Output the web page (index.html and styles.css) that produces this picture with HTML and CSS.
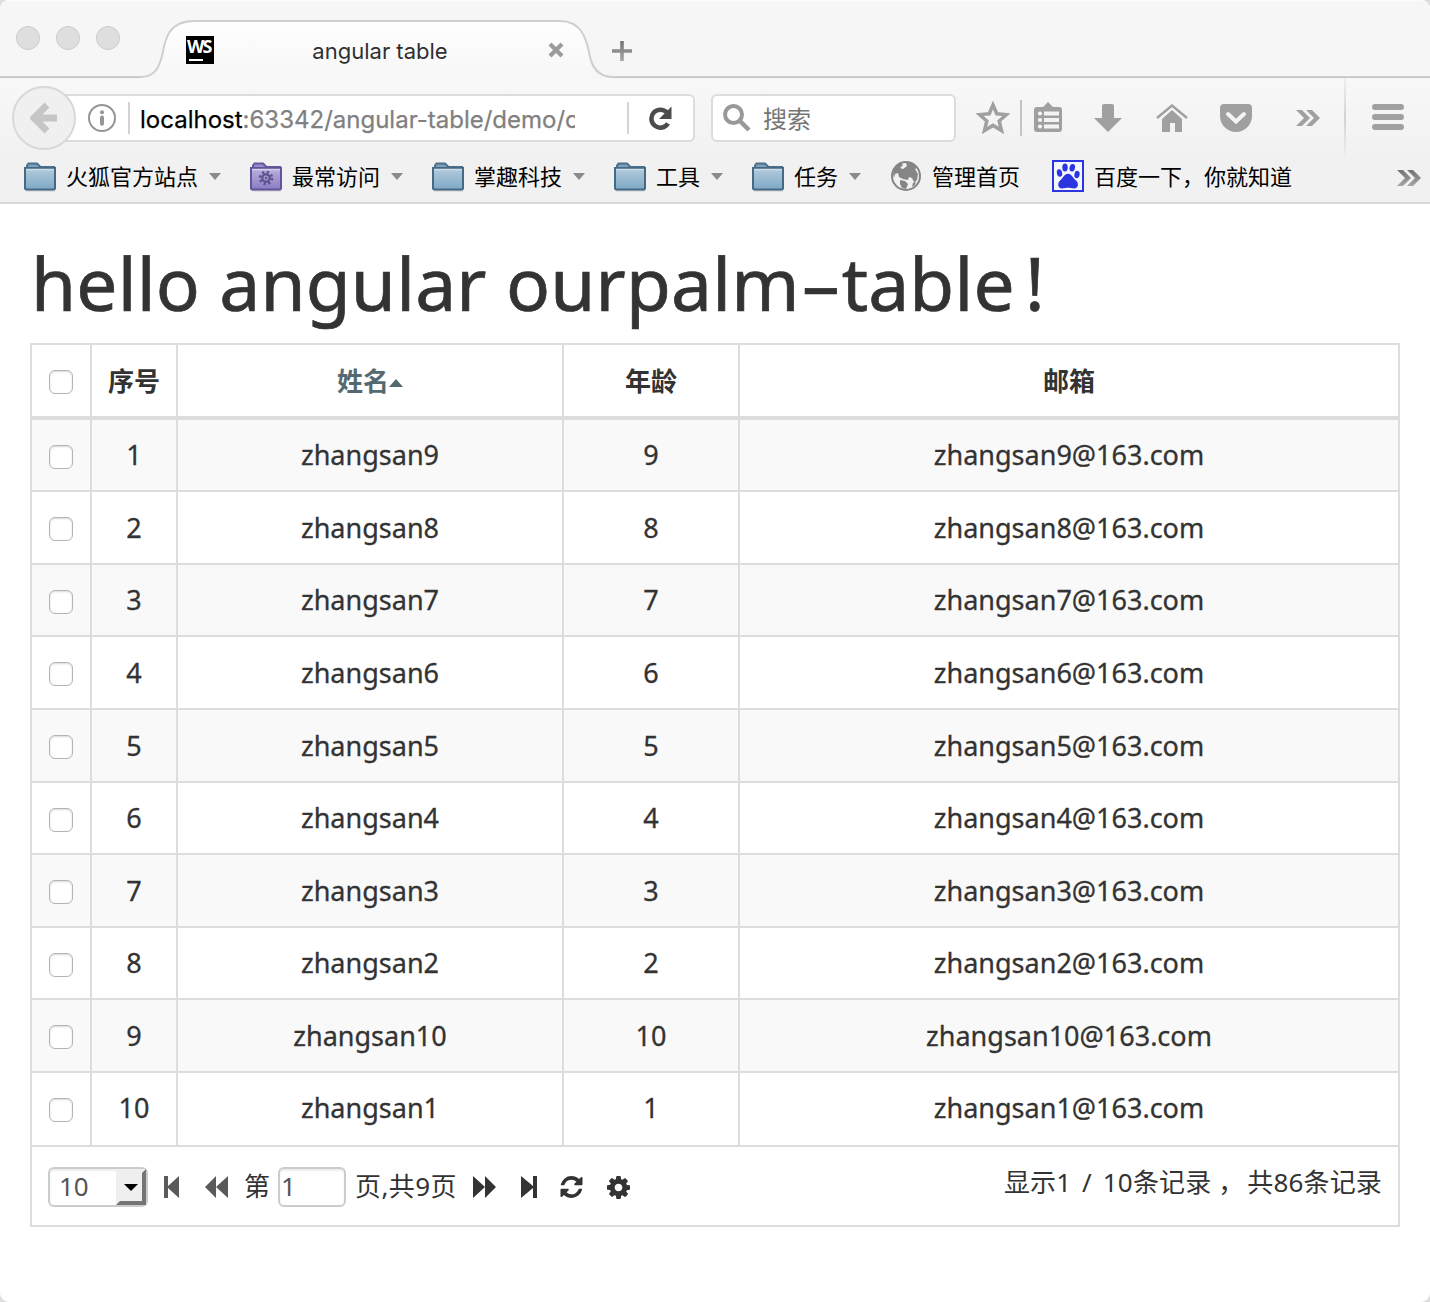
FILE: index.html
```html
<!DOCTYPE html>
<html lang="zh-CN">
<head>
<meta charset="utf-8">
<title>angular table</title>
<link rel="stylesheet" href="styles.css">
</head>
<body>
<svg class="defs" width="0" height="0" aria-hidden="true">
  <defs>
    <linearGradient id="blueFill" x1="0" y1="0" x2="0" y2="1"><stop offset="0" stop-color="#b4cbdb"/><stop offset="1" stop-color="#7ea9c7"/></linearGradient>
    <linearGradient id="purpleFill" x1="0" y1="0" x2="0" y2="1"><stop offset="0" stop-color="#bcb2dc"/><stop offset="1" stop-color="#8b7cc3"/></linearGradient>
    <linearGradient id="tabFill" x1="0" y1="0" x2="0" y2="1"><stop offset="0" stop-color="#fefefe"/><stop offset="1" stop-color="#f7f7f7"/></linearGradient>
    <linearGradient id="greyFill" x1="0" y1="0" x2="0" y2="1"><stop offset="0" stop-color="#737373"/><stop offset="1" stop-color="#a6a6a6"/></linearGradient>
    <symbol id="folder" viewBox="0 0 32 30">
      <path d="M2 28.500H31" stroke="#cfcfcf" stroke-width="2"/>
      <path d="M3 7V3.500L4.500 1.500H13L16.500 5H30V12H3Z" fill="#7ba0bd" stroke="#4d6f8a" stroke-width="2"/>
      <path d="M1 6H31V26.500L30 27.500H2L1 26.500Z" fill="url(#blueFill)" stroke="#466a84" stroke-width="2"/>
      <path d="M2 7.500H30" stroke="#cfdfe9" stroke-width="1.500"/>
    </symbol>
    <symbol id="smart-folder" viewBox="0 0 32 30">
      <path d="M2 28.500H31" stroke="#cfcfcf" stroke-width="2"/>
      <path d="M3 7V3.500L4.500 1.500H13L16.500 5H30V12H3Z" fill="#9a8cca" stroke="#66569c" stroke-width="2"/>
      <path d="M1 6H31V26.500L30 27.500H2L1 26.500Z" fill="url(#purpleFill)" stroke="#62549b" stroke-width="2"/>
      <path d="M2 7.500H30" stroke="#d6cfea" stroke-width="1.500"/>
      <circle cx="16" cy="16" r="5.800" fill="none" stroke="#5e548f" stroke-width="3" stroke-dasharray="2.200 2.355"/>
      <circle cx="16" cy="16" r="3.700" fill="none" stroke="#5e548f" stroke-width="2.200"/>
      <circle cx="16" cy="16" r="1.200" fill="#5e548f"/>
    </symbol>
    <symbol id="more" viewBox="0 0 24 18"><path d="M0 1H6L14 9L6 17H0L8 9ZM10 1H16L24 9L16 17H10L18 9Z"/></symbol>
  </defs>
</svg>
<div class="window">
  <header class="chrome">
    <div class="tabbar">
      <div class="lights"><i></i><i></i><i></i></div>
      <div class="tab">
        <svg class="tab-shape" width="474" height="78" viewBox="0 0 474 78">
          <path d="M0 78V77C14 77 19 69 22.500 54C25 40 28 21 54 21H420C441 21 446 38 449 52C451 66 457 77 473 77V78Z" fill="url(#tabFill)"/>
          <path d="M0 77C14 77 19 69 22.500 54C25 40 28 21 54 21H420C441 21 446 38 449 52C451 66 457 77 473 77" fill="none" stroke="#cfcfcf" stroke-width="2"/>
        </svg>
        <span class="favicon">WS</span>
        <span class="tab-title">angular table</span>
        <svg class="tab-close" width="16" height="16" viewBox="0 0 16 16"><path d="M2 2L14 14M14 2L2 14" stroke="#9b9b9b" stroke-width="4.200"/></svg>
      </div>
      <svg class="new-tab" width="20" height="20" viewBox="0 0 20 20"><path d="M8.200 0H11.800V8.200H20V11.800H11.800V20H8.200V11.800H0V8.200H8.200Z" fill="url(#greyFill)"/></svg>
    </div>
    <div class="navbar">
      <span class="back"><svg width="28" height="32" viewBox="0 0 28 32"><path d="M17 3L4 16L17 29M4 16H27" fill="none" stroke="#c6c6c6" stroke-width="7"/></svg></span>
      <div class="urlbar">
        <svg class="info" width="28" height="28" viewBox="0 0 28 28"><circle cx="14" cy="14" r="13" fill="none" stroke="#959595" stroke-width="2"/><circle cx="14" cy="8.300" r="2" fill="#959595"/><path d="M14 13.500V19.800" stroke="#959595" stroke-width="4" stroke-linecap="round"/></svg>
        <i class="line"></i>
        <span class="url"><b>localhost</b>:63342/angular-table/demo/c</span>
        <i class="line"></i>
        <svg class="reload" width="24" height="25" viewBox="0 0 24 25"><path d="M19 17.500A9 9 0 1 1 18 6.500" fill="none" stroke="#4c4c4c" stroke-width="4.500"/><path d="M22.500 .5V13H10Z" fill="#4c4c4c"/></svg>
      </div>
      <div class="search">
        <svg width="28" height="28" viewBox="0 0 28 28"><circle cx="10.500" cy="10.500" r="8.500" fill="none" stroke="#999" stroke-width="4"/><path d="M16.500 16.500L26 26" stroke="#999" stroke-width="4.500"/></svg>
        <span>搜索</span>
      </div>
      <svg class="tool star" width="34" height="34" viewBox="0 0 34 34"><path d="M17 4L20.800 12.800L30.500 13.600L23.200 20L25.500 29.500L17 24.400L8.500 29.500L10.800 20L3.500 13.600L13.200 12.800Z" fill="none" stroke="#a0a0a0" stroke-width="3.500"/></svg>
      <i class="tool-line"></i>
      <svg class="tool list" width="28" height="30" viewBox="0 0 28 30"><path fill="#a0a0a0" d="M9 5L14 0L19 5H25Q28 5 28 8V27Q28 30 25 30H3Q0 30 0 27V8Q0 5 3 5Z"/><path stroke="#f4f4f4" stroke-width="4" d="M10 11.500H25M10 18H25M10 24.500H25"/><g fill="#f4f4f4"><circle cx="6" cy="11.500" r="2.100"/><circle cx="6" cy="18" r="2.100"/><circle cx="6" cy="24.500" r="2.100"/></g></svg>
      <svg class="tool down" width="28" height="28" viewBox="0 0 28 28"><path fill="#a0a0a0" d="M10 0H18Q20 0 20 2V14H28L14 28L0 14H8V2Q8 0 10 0Z"/></svg>
      <svg class="tool home" width="32" height="28" viewBox="0 0 32 28"><path d="M1 14L16 1.500L31 14" fill="none" stroke="#a0a0a0" stroke-width="2.400"/><path fill="#a0a0a0" d="M16 6L26 15V28H19V19H14V28H6V15Z"/></svg>
      <svg class="tool pocket" width="32" height="28" viewBox="0 0 32 28"><path fill="#a0a0a0" d="M4 0H28Q32 0 32 4V12A16 16 0 0 1 0 12V4Q0 0 4 0Z"/><path d="M8 10L16 17.500L24 10" fill="none" stroke="#f4f4f4" stroke-width="4" stroke-linecap="round"/></svg>
      <svg class="tool over" width="24" height="18" fill="#a0a0a0"><use href="#more"/></svg>
      <i class="menu-line"></i>
      <span class="menu"><i></i><i></i><i></i></span>
    </div>
    <nav class="bookmarks">
      <span class="mark"><svg width="32" height="30"><use href="#folder"/></svg><em>火狐官方站点</em><i class="drop"></i></span>
      <span class="mark"><svg width="32" height="30"><use href="#smart-folder"/></svg><em>最常访问</em><i class="drop"></i></span>
      <span class="mark"><svg width="32" height="30"><use href="#folder"/></svg><em>掌趣科技</em><i class="drop"></i></span>
      <span class="mark"><svg width="32" height="30"><use href="#folder"/></svg><em>工具</em><i class="drop"></i></span>
      <span class="mark"><svg width="32" height="30"><use href="#folder"/></svg><em>任务</em><i class="drop"></i></span>
      <span class="mark"><svg width="32" height="32" viewBox="0 0 32 32"><circle cx="16" cy="16" r="14" fill="#f1f1f1" stroke="#858585" stroke-width="2"/><path fill="#858585" d="M3 14Q4 6 11 3L13 5L10 8L13 9L17 6L16 3Q23 2 27 8L25 9L28 14L27 20L24 22L22 18L19 17L18 20L13 19L9 17L8 13L5 14L4 18ZM10 20L15 21L18 24L16 29L12 28L10 24ZM23 23L26 21L25 25L22 27Z"/></svg><em>管理首页</em></span>
      <span class="mark paw"><svg width="32" height="32" viewBox="0 0 32 32"><path d="M1 1H31V31H1Z" fill="#f6f6ff" stroke="#2b36e0" stroke-width="2"/><g fill="#2b36e0"><ellipse cx="13" cy="7.500" rx="2.700" ry="3.900"/><ellipse cx="20.300" cy="7.700" rx="2.700" ry="3.800" transform="rotate(12 20.300 7.700)"/><ellipse cx="7.500" cy="13" rx="2.600" ry="3.800" transform="rotate(-12 7.500 13)"/><ellipse cx="25" cy="14.500" rx="2.600" ry="3.700" transform="rotate(12 25 14.500)"/><path d="M16 13.800C20 13.800 20.500 18 24 20.500C27.500 23.500 26 28.500 22 28.500C19 28.500 18 27.800 16 27.800S12.500 28.500 10 28.500C6 28.500 5 23.500 8 20.500C11.500 18 12 13.800 16 13.800Z"/></g></svg><em>百度一下，你就知道</em></span>
      <svg class="marks-more" width="24" height="18" fill="url(#greyFill)"><use href="#more"/></svg>
    </nav>
  </header>

  <main class="page">
    <h1>hello angular ourpalm<span class="dash">-</span>table<span class="bang">!</span></h1>
    <table class="grid">
      <colgroup><col class="c-check"><col class="c-no"><col class="c-name"><col class="c-age"><col class="c-mail"></colgroup>
      <thead>
        <tr><th><i class="check"></i></th><th>序号</th><th class="sorted">姓名<i class="caret"></i></th><th>年龄</th><th>邮箱</th></tr>
      </thead>
      <tbody>
        <tr><td><i class="check"></i></td><td>1</td><td>zhangsan9</td><td>9</td><td>zhangsan9@163.com</td></tr>
        <tr><td><i class="check"></i></td><td>2</td><td>zhangsan8</td><td>8</td><td>zhangsan8@163.com</td></tr>
        <tr><td><i class="check"></i></td><td>3</td><td>zhangsan7</td><td>7</td><td>zhangsan7@163.com</td></tr>
        <tr><td><i class="check"></i></td><td>4</td><td>zhangsan6</td><td>6</td><td>zhangsan6@163.com</td></tr>
        <tr><td><i class="check"></i></td><td>5</td><td>zhangsan5</td><td>5</td><td>zhangsan5@163.com</td></tr>
        <tr><td><i class="check"></i></td><td>6</td><td>zhangsan4</td><td>4</td><td>zhangsan4@163.com</td></tr>
        <tr><td><i class="check"></i></td><td>7</td><td>zhangsan3</td><td>3</td><td>zhangsan3@163.com</td></tr>
        <tr><td><i class="check"></i></td><td>8</td><td>zhangsan2</td><td>2</td><td>zhangsan2@163.com</td></tr>
        <tr><td><i class="check"></i></td><td>9</td><td>zhangsan10</td><td>10</td><td>zhangsan10@163.com</td></tr>
        <tr><td><i class="check"></i></td><td>10</td><td>zhangsan1</td><td>1</td><td>zhangsan1@163.com</td></tr>
      </tbody>
    </table>
    <div class="pager">
      <span class="size"><span>10</span><i><b></b></i></span>
      <svg class="first off" width="16" height="22" viewBox="0 0 16 22"><path d="M0 0H4V10L15 0V22L4 12V22H0Z"/></svg>
      <svg class="prev off" width="23" height="22" viewBox="0 0 23 22"><path d="M0 11L11 0V11L23 0V22L11 11V22Z"/></svg>
      <span class="di">第</span>
      <span class="num">1</span>
      <span class="total">页,共9页</span>
      <svg class="next" width="23" height="22" viewBox="0 0 23 22"><path d="M23 11L12 0V11L0 0V22L12 11V22Z"/></svg>
      <svg class="last" width="16" height="22" viewBox="0 0 16 22"><path d="M16 0H12V10L0 0V22L12 12V22H16Z"/></svg>
      <svg class="refresh" width="23" height="22" viewBox="0 0 1536 1536"><path d="M1511 928q0 5-1 7-64 268-268 434.500T764 1536q-146 0-282.500-55T238 1324l-129 129q-19 19-45 19t-45-19-19-45V960q0-26 19-45t45-19h448q26 0 45 19t19 45-19 45l-137 137q71 66 161 102t187 36q134 0 250-65t186-179q11-17 53-117 8-23 30-23h192q13 0 22.500 9.500t9.500 22.500zm25-800v448q0 26-19 45t-45 19h-448q-26 0-45-19t-19-45 19-45l138-138Q969 256 768 256q-134 0-250 65T332 500q-11 17-53 117-8 23-30 23H50q-13 0-22.500-9.500T18 608v-7q65-268 270-434.500T768 0q146 0 284 55.500T1297 212l130-129q19-19 45-19t45 19 19 45z"/></svg>
      <svg class="gear" width="23" height="23" viewBox="0 0 1536 1536"><path d="M1024 768q0-106-75-181t-181-75-181 75-75 181 75 181 181 75 181-75 75-181zm512-109v222q0 12-8 23t-20 13l-185 28q-19 54-39 91 35 50 107 138 10 12 10 25t-9 23q-27 37-99 108t-94 71q-12 0-26-9l-138-108q-44 23-91 38-16 136-29 186-7 28-36 28H657q-14 0-24.500-8.500T621 1506l-28-184q-49-16-90-37l-141 107q-10 9-25 9-14 0-25-11-126-114-165-168-7-10-7-23 0-12 8-23 15-21 51-66.500t54-70.500q-27-50-41-99L29 913q-13-2-21-12.500T0 877V655q0-12 8-23t19-13l186-28q14-46 39-92-40-57-107-138-10-12-10-24 0-10 9-23 26-36 98.500-107.500T337 135q13 0 26 10l138 107q44-23 91-38 16-136 29-186 7-28 36-28h222q14 0 24.500 8.500T915 30l28 184q49 16 90 37l142-107q9-9 24-9 13 0 25 10 129 119 165 170 7 8 7 22 0 12-8 23-15 21-51 66.500t-54 70.500q26 50 41 98l183 28q13 2 21 12.500t8 23.500z"/></svg>
      <span class="summary">显示1 / 10条记录<span class="comma">，</span>共86条记录</span>
    </div>
  </main>
</div>
</body>
</html>
```
FILE: styles.css
```css
* { box-sizing: border-box; }
body { margin: 0; background: #dedede; }
svg { display: block; flex: none; }
.defs { position: absolute; }
i, em { font-style: normal; flex: none; }

.window {
  width: 1430px;
  height: 1302px;
  overflow: hidden;
  border-radius: 9px;
  background: #fff;
}

/* browser chrome */
.chrome { height: 204px; background: #f5f5f5; border-bottom: 2px solid #d8d8d8; }
.tabbar {
  display: flex;
  height: 78px;
  background: linear-gradient(#d6d6d6, #bebebe) 0 76px / 100% 2px no-repeat, linear-gradient(#fcfcfc 0 1px, #f6f6f6 2px);
}
.lights { display: flex; gap: 16px; padding: 26px 0 0 16px; width: 140px; }
.lights i { width: 24px; height: 24px; border-radius: 50%; background: #dedede; border: 1px solid #cbcbcb; }
.tab { position: relative; display: flex; width: 472px; }
.tab-shape { position: absolute; left: 0; top: 0; }
.favicon {
  position: relative;
  width: 28px;
  height: 28px;
  margin: 36px 0 0 46px;
  background: linear-gradient(#fff, #fff) 3px 23px / 14px 2px no-repeat #000;
  color: #fff;
  font: bold 18px/21px "Open Sans", sans-serif;
  letter-spacing: -2px;
  text-indent: 1px;
}
.tab-title {
  position: relative;
  width: 334px;
  padding: 36px 2px 0 0;
  font: 22px/30px Inter, sans-serif;
  color: #303030;
  text-align: center;
}
.tab-close { position: relative; margin: 42px 0 0 0; }
.new-tab { margin-top: 41px; }

.navbar {
  display: flex;
  align-items: center;
  height: 80px;
  background: linear-gradient(#f8f8f8, #f1f1f1);
}
.back {
  position: relative;
  z-index: 1;
  display: flex;
  align-items: center;
  justify-content: center;
  width: 64px;
  height: 64px;
  margin-left: 12px;
  border: 2px solid #d8d8d8;
  border-radius: 50%;
  background: #f0f0f0;
  flex: none;
}
.urlbar, .search {
  display: flex;
  align-items: center;
  height: 48px;
  border: 2px solid #dcdcdc;
  border-radius: 6px;
  background: #fff;
  flex: none;
}
.urlbar { width: 635px; margin-left: -16px; padding-left: 26px; }
.line { width: 2px; height: 32px; background: #d4d4d4; }
.info + .line { margin-left: 12px; }
.url {
  width: 435px;
  margin: 0 52px 0 10px;
  padding-top: 3px;
  overflow: hidden;
  white-space: nowrap;
  font: 24px/32px Inter, sans-serif;
  color: #808080;
  -webkit-text-stroke: .25px;
}
.url b { font-weight: 400; color: #000; }
.reload { margin-left: 20px; }
.search { width: 245px; margin-left: 16px; padding-left: 10px; }
.search span { margin-left: 12px; font: 24px/32px "Noto Sans CJK SC", sans-serif; color: #757575; }
.star { margin-left: 20px; }
.tool-line { width: 2px; height: 36px; margin-left: 10px; background: #c4c4c4; }
.list { margin: -3px 0 0 12px; }
.down { margin-left: 32px; }
.home { margin-left: 34px; }
.pocket { margin-left: 32px; }
.over { margin-left: 44px; }
.menu-line { width: 2px; height: 80px; margin-left: 24px; background: linear-gradient(#efefef, #d2d2d2 50%, #efefef); }
.menu { display: flex; flex-direction: column; gap: 4px; margin: -2px 0 0 26px; }
.menu i { width: 32px; height: 6px; border-radius: 3px; background: #a0a0a0; }

.bookmarks { display: flex; align-items: center; height: 44px; padding: 0 9px 8px 24px; background: #f1f1f1; }
.mark { display: flex; align-items: center; margin-right: 29px; flex: none; }
.mark svg[height="30"] { margin-top: 2px; }
.mark em { margin: -2px 0 0 10px; font: 22px/32px "Noto Sans CJK SC", sans-serif; color: #000; white-space: nowrap; }
.drop { margin-left: 11px; border: 6px solid transparent; border-top: 7px solid #8a8a8a; border-bottom: 0; }
.mark.paw { margin-left: 3px; }
.marks-more { margin: 4px 0 0 auto; }

/* page */
.page { padding: 0 30px; color: #333; font-family: "Noto Sans", "Noto Sans CJK SC", sans-serif; }
h1 {
  height: 139px;
  margin: 0;
  padding: 29px 0 0 1px;
  font-size: 73px;
  font-weight: 400;
  line-height: 100px;
  letter-spacing: .2px;
  white-space: nowrap;
  -webkit-text-stroke: .7px;
}
.dash { display: inline-block; width: 42px; text-align: center; transform: scaleX(1.750); }
.bang { margin-left: 10px; }

.grid {
  width: 1370px;
  table-layout: fixed;
  border-collapse: separate;
  border-spacing: 0;
  border: solid #ddd;
  border-width: 2px 0 0 2px;
  font-size: 27px;
  line-height: 36px;
}
.c-check { width: 60px; }
.c-no { width: 86px; }
.c-name { width: 386px; }
.c-age { width: 176px; }
.grid th, .grid td {
  height: 73px;
  padding: 0;
  border: solid #ddd;
  border-width: 0 2px 2px 0;
  text-align: center;
  vertical-align: middle;
}
.grid td { -webkit-text-stroke: .3px; }
.grid th { height: 75px; padding-bottom: 2px; border-bottom-width: 4px; font: bold 26px/36px "Noto Sans CJK SC", sans-serif; }
.grid tbody tr:nth-child(odd) { background: #f9f9f9; }
.grid tbody tr:is(:nth-child(1), :nth-child(3), :nth-child(6), :nth-child(8)) td { height: 72px; }
.grid tbody tr:last-child td { height: 74px; padding-bottom: 2px; }
.check {
  display: block;
  width: 24px;
  height: 24px;
  margin: 3px auto 0;
  border: 1.500px solid #b4b4b4;
  border-radius: 6px;
  background: #fff;
  box-shadow: inset 0 1px 2px rgba(0, 0, 0, .15);
}
th .check { margin-top: 5px; }
.grid .sorted { color: #556970; }
.caret { display: inline-block; margin: 0 0 4px; border: 7.500px solid transparent; border-bottom: 8px solid #556970; border-top: 0; }

.pager {
  display: flex;
  align-items: center;
  height: 80px;
  padding: 2px 16px 0;
  border: 2px solid #ddd;
  border-top: 0;
  font-size: 26px;
  line-height: 36px;
  fill: #333;
  white-space: nowrap;
}
.size, .num {
  display: flex;
  height: 40px;
  border: 2px solid #ccc;
  border-radius: 6px;
  color: #555;
  line-height: 34px;
  box-shadow: inset 0 2px 2px rgba(0, 0, 0, .075);
}
.size { width: 100px; padding-left: 9px; justify-content: space-between; }
.size i {
  display: flex;
  align-items: center;
  justify-content: center;
  width: 30px;
  border: 4px solid;
  border-color: #efefef #737575 #737575 #efefef;
  background: #efefef;
}
.size b { border: 7px solid transparent; border-top: 7px solid #000; border-bottom: 0; }
.num { width: 68px; margin-left: 8px; padding-left: 1px; }
.off { fill: #5a5a5a; }
.first { margin-left: 16px; }
.prev { margin-left: 25px; }
.di { margin: -2px 0 0 16px; width: 26px; }
.total { width: 102px; margin: -2px 0 0 9px; letter-spacing: .4px; }
.next { margin-left: 16px; }
.last { margin-left: 25px; }
.refresh { margin-left: 23px; }
.gear { margin-left: 24px; }
.summary { margin: -10px 0 0 auto; letter-spacing: .15px; word-spacing: 4px; }
.comma { display: inline-block; width: 36px; padding-left: 7px; }
```
